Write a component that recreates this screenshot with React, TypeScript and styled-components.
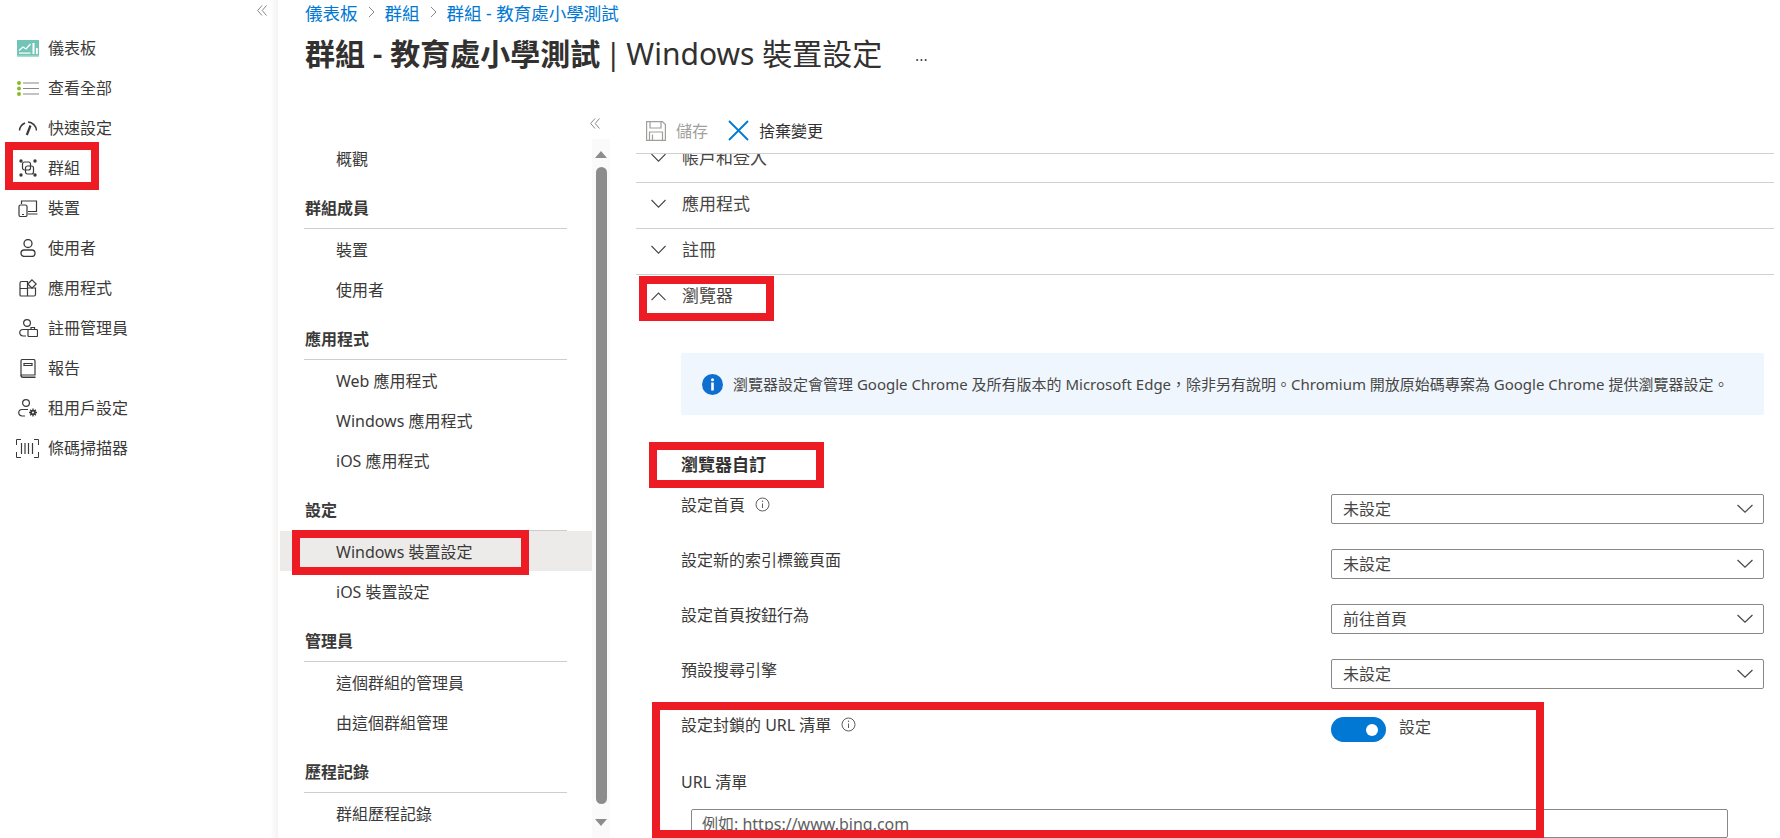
import React from "react";
import styled, { createGlobalStyle } from "styled-components";

const Global = createGlobalStyle`
  html, body { margin: 0; padding: 0; height: 838px; overflow: hidden; background: #fff; }
  body { font-family: "Noto Sans", "Noto Sans CJK TC", sans-serif; color: #323130; font-size: 16px; }
  * { box-sizing: border-box; }
`;

const Page = styled.div`
  position: relative;
  display: flex;
  width: 1780px;
  height: 838px;
  overflow: hidden;
`;

const Sidebar = styled.nav`
  width: 278px;
  flex: none;
  background: linear-gradient(to right, #fff 270px, #f3f3f3 278px);
`;

const SidebarTop = styled.div`
  height: 28px;
  display: flex;
  justify-content: flex-end;
  padding: 5px 11px 0 0;
`;

const SideItem = styled.div`
  height: 40px;
  display: flex;
  align-items: center;
  gap: 8px;
  padding-left: 16px;
  line-height: 24px;
  color: #3b3a39;
`;

const SideIcon = styled.span`
  width: 24px;
  height: 24px;
  display: flex;
  align-items: center;
  justify-content: center;
  flex: none;
`;

const Main = styled.main`
  flex: 1;
  min-width: 0;
  display: flex;
  flex-direction: column;
`;

const Header = styled.header`
  height: 100px;
  flex: none;
  padding: 0 0 0 27px;
`;

const Crumbs = styled.div`
  display: flex;
  align-items: center;
  height: 24px;
  font-size: 17.5px;
  color: #0078d4;
  gap: 10px;
`;

const TitleRow = styled.div`
  display: flex;
  align-items: center;
  margin-top: 11px;
  height: 38px;
`;

const Title = styled.h1`
  margin: 0;
  font-size: 30px;
  line-height: 38px;
  font-weight: 400;
  color: #323130;
  white-space: nowrap;
  b { font-weight: 600; }
`;

const TitleSep = styled.span`
  word-spacing: -3px;
`;

const More = styled.span`
  margin-left: 33px;
  font-size: 14px;
  line-height: 14px;
  margin-top: 4px;
  color: #323130;
  letter-spacing: 0.5px;
`;

const Split = styled.div`
  flex: 1;
  min-height: 0;
  display: flex;
`;

const SecNav = styled.aside`
  width: 358px;
  flex: none;
  display: flex;
  flex-direction: column;
  min-height: 0;
`;

const SecNavTop = styled.div`
  height: 39px;
  flex: none;
  display: flex;
  justify-content: flex-end;
  padding: 18px 36px 0 0;
`;

const SecNavBody = styled.div`
  flex: 1;
  min-height: 0;
  display: flex;
`;

const SecList = styled.div`
  width: 314px;
  flex: none;
  padding-left: 2px;
`;

const GroupHead = styled.div`
  height: 50px;
  margin: 0 25px 1px 24px;
  display: flex;
  align-items: flex-end;
  padding: 0 0 8px 1px;
  border-bottom: 1px solid #cfcdcb;
  font-weight: 600;
  line-height: 24px;
  color: #3b3a39;
`;

const SecItem = styled.div<{ $active?: boolean }>`
  height: 40px;
  display: flex;
  align-items: center;
  padding-left: 56px;
  line-height: 24px;
  color: #3b3a39;
  ${(p) => (p.$active ? "background:#edebe9; margin: -1px 0 1px; padding-top: 2px;" : "")}
`;

const ScrollTrack = styled.div`
  width: 18px;
  flex: none;
  background: #fafafa;
  display: flex;
  flex-direction: column;
  align-items: center;
  padding: 12px 0 12px 0;
`;

const ScrollUp = styled.span`
  width: 0;
  height: 0;
  border-left: 6.5px solid transparent;
  border-right: 6.5px solid transparent;
  border-bottom: 7px solid #8c8c8c;
`;

const ScrollThumb = styled.div`
  width: 11px;
  margin: 9px 0 15px;
  flex: 1;
  background: #8c8c8c;
  border-radius: 5.5px;
`;

const ScrollDown = styled.span`
  width: 0;
  height: 0;
  border-left: 6.5px solid transparent;
  border-right: 6.5px solid transparent;
  border-top: 7px solid #8c8c8c;
`;

const Pane = styled.section`
  width: 1138px;
  flex: none;
  display: flex;
  flex-direction: column;
  min-height: 0;
`;

const Toolbar = styled.div`
  height: 54px;
  flex: none;
  display: flex;
  align-items: center;
  padding: 8px 0 0 10px;
  border-bottom: 1px solid #d2d0ce;
`;

const ToolButton = styled.div<{ $disabled?: boolean }>`
  display: flex;
  align-items: center;
  gap: 10px;
  margin-right: 20px;
  line-height: 24px;
  color: ${(p) => (p.$disabled ? "#a19f9d" : "#323130")};
`;

const PaneScroll = styled.div`
  flex: 1;
  min-height: 0;
  overflow: hidden;
`;

const PaneInner = styled.div`
  margin-top: -17px;
`;

const AccRow = styled.div<{ $open?: boolean }>`
  height: 46px;
  display: flex;
  align-items: center;
  gap: 16px;
  padding: 0 0 4px 15px;
  font-size: 17px;
  line-height: 24px;
  color: #484644;
  ${(p) => (p.$open ? "" : "border-bottom: 1px solid #d2d0ce;")}
`;

const InfoBar = styled.div`
  margin: 32px 10px 0 45px;
  height: 62px;
  background: #eff6fe;
  border-radius: 2px;
  display: flex;
  align-items: center;
  gap: 10px;
  padding: 0 0 0 21px;
  font-size: 15px;
  line-height: 22px;
  color: #484644;
  white-space: nowrap;
`;

const SectionTitle = styled.h3`
  margin: 38px 0 0 45px;
  height: 41px;
  font-size: 17px;
  line-height: 24px;
  font-weight: 600;
  color: #323130;
`;

const Field = styled.div<{ $h?: number }>`
  display: flex;
  height: ${(p) => p.$h ?? 55}px;
  padding-left: 45px;
  margin-right: 10px;
`;

const FieldLabel = styled.div`
  width: 650px;
  height: 24px;
  margin-top: -1px;
  flex: none;
  display: flex;
  align-items: flex-start;
  gap: 10px;
  line-height: 24px;
  color: #3b3a39;
`;

const Select = styled.div`
  width: 433px;
  height: 30px;
  display: flex;
  align-items: center;
  justify-content: space-between;
  padding: 0 10px 1px 11px;
  border: 1px solid #8a8886;
  border-radius: 2px;
  line-height: 24px;
  color: #484644;
`;

const ToggleWrap = styled.div`
  display: flex;
  align-items: flex-start;
  gap: 13px;
  height: 25px;
  margin-top: 3px;
  line-height: 20px;
  color: #484644;
`;

const Toggle = styled.span`
  width: 55px;
  height: 25px;
  border-radius: 13px;
  background: #0078d4;
  display: flex;
  align-items: center;
  justify-content: flex-end;
  padding-right: 8px;
`;

const Knob = styled.span`
  width: 12px;
  height: 12px;
  border-radius: 50%;
  background: #fff;
`;

const SubLabel = styled.div`
  margin: -1px 0 0 45px;
  height: 24px;
  line-height: 24px;
  color: #3b3a39;
`;

const UrlInput = styled.input`
  display: block;
  margin: 15px 0 0 55px;
  width: 1037px;
  height: 29px;
  padding: 0 10px;
  border: 1px solid #8a8886;
  border-radius: 2px;
  font: inherit;
  line-height: 24px;
  &::placeholder { color: #605e5c; opacity: 1; }
`;

const Mark = styled.div<{ $x: number; $y: number; $w: number; $h: number }>`
  position: absolute;
  left: ${(p) => p.$x}px;
  top: ${(p) => p.$y}px;
  width: ${(p) => p.$w}px;
  height: ${(p) => p.$h}px;
  border: 8px solid #ed1c24;
  pointer-events: none;
`;

const DoubleLeft = () => (
  <svg width="10" height="11" viewBox="0 0 10 11" fill="none" stroke="#8a8886" strokeWidth="1">
    <path d="M5 .5 .7 5.5 5 10.500M9.500 .5 5.200 5.500l4.300 5" />
  </svg>
);

const Chevron = ({ up, w = 15 }: { up?: boolean; w?: number }) => (
  <svg width={w} height="9" viewBox="0 0 15 9" fill="none" stroke="#484644" strokeWidth="1.100" preserveAspectRatio="none">
    <path d={up ? "M.5 8.200 7.500 1l7 7.200" : "M.5 1l7 7.200L14.500 1"} />
  </svg>
);

const Sep = () => (
  <svg width="7" height="12" viewBox="0 0 7 12" fill="none" stroke="#8a8886" strokeWidth="1">
    <path d="M1 1l5 5-5 5" />
  </svg>
);

const SmallInfo = () => (
  <svg width="15" height="15" viewBox="0 0 15 15" fill="none" stroke="#605e5c" strokeWidth="1" style={{ marginTop: 4 }}>
    <circle cx="7.500" cy="7.500" r="6.500" />
    <path d="M7.500 6.500v4.500" />
    <circle cx="7.500" cy="4.300" r=".7" fill="#605e5c" stroke="none" />
  </svg>
);

const dark = "#3b3a39";

const icons: Record<string, React.ReactNode> = {
  dash: (
    <svg width="22" height="17" viewBox="0 0 22 17" style={{ marginLeft: -1 }}>
      <rect width="22" height="17" fill="#72c5b6" />
      <rect y="15.500" width="22" height="1.500" fill="#a8ddd3" />
      <path d="M2 10.500 6 7l3 2 4.500-5" fill="none" stroke="#fff" strokeWidth="1.200" />
      <rect x="2" y="12.500" width="11.500" height="1.200" fill="#fff" />
      <rect x="15.500" y="3" width="2" height="11" fill="#fff" />
      <rect x="19" y="8" width="1.800" height="6" fill="#fff" />
    </svg>
  ),
  list: (
    <svg width="22" height="15" viewBox="0 0 22 15" style={{ marginLeft: -1 }}>
      <circle cx="2" cy="2" r="2" fill="#86bc25" />
      <circle cx="2" cy="7.500" r="2" fill="#86bc25" />
      <circle cx="2" cy="13" r="2" fill="#86bc25" />
      <path d="M6 2h16M6 7.500h16M6 13h16" stroke="#8a8886" strokeWidth="1.200" />
    </svg>
  ),
  gauge: (
    <svg width="20" height="16" viewBox="0 0 20 16" fill="none" stroke={dark}>
      <path d="M1.500 10.500A9 9 0 0 1 7 3" strokeWidth="1.500" />
      <path d="M10 2A9 9 0 0 1 18.500 10.500" strokeWidth="1.500" />
      <path d="M8.800 15 12.500 5.500" strokeWidth="2.200" />
    </svg>
  ),
  group: (
    <svg width="18" height="18" viewBox="0 0 18 18" fill="none" stroke={dark} strokeWidth="1.200">
      <circle cx="2" cy="2" r="1.700" fill={dark} stroke="none" />
      <circle cx="16" cy="2" r="1.700" fill={dark} stroke="none" />
      <circle cx="2" cy="16" r="1.700" fill={dark} stroke="none" />
      <circle cx="16" cy="16" r="1.700" fill={dark} stroke="none" />
      <rect x="3.500" y="3" width="8" height="8" rx="2" />
      <rect x="6.500" y="7" width="8" height="8" rx="2" />
    </svg>
  ),
  device: (
    <svg width="20" height="17" viewBox="0 0 20 17" fill="none" stroke={dark} strokeWidth="1.200">
      <path d="M3.500 4V1h15v10.500H10M10 14h9.500" />
      <rect x="1" y="5" width="8" height="11.500" rx="1.500" />
      <path d="M4 14.500h2" />
    </svg>
  ),
  user: (
    <svg width="16" height="18" viewBox="0 0 16 18" fill="none" stroke={dark} strokeWidth="1.300">
      <circle cx="8" cy="4.500" r="4" />
      <rect x="1" y="11" width="14" height="6.500" rx="3.200" />
    </svg>
  ),
  apps: (
    <svg width="18" height="18" viewBox="0 0 18 18" fill="none" stroke={dark} strokeWidth="1.200">
      <path d="M8.500 2.500h-6a1.500 1.500 0 0 0-1.500 1.500v12a1 1 0 0 0 1 1h13a1.500 1.500 0 0 0 1.500-1.500v-6.500H8.500zM8.500 9.500H1M8.500 9.500V17" />
      <path d="M13 .8 17.200 5 13 9.200 8.800 5z" />
    </svg>
  ),
  admin: (
    <svg width="19" height="18" viewBox="0 0 19 18" fill="none" stroke={dark} strokeWidth="1.200">
      <circle cx="8" cy="4" r="3.400" />
      <path d="M7 17H4a3 3 0 0 1 0-6.500h6" />
      <rect x="9" y="10.500" width="9.500" height="7" rx="1" />
      <path d="M12 10.500V8.500h3.500v2" />
    </svg>
  ),
  book: (
    <svg width="16" height="19" viewBox="0 0 16 19" fill="none" stroke={dark} strokeWidth="1.200">
      <path d="M1 16V2a1.500 1.500 0 0 1 1.500-1.500h11A1.500 1.500 0 0 1 15 2v14z" />
      <path d="M4 4.500h8v2H4z" />
      <path d="M1 16c0 1.500 1 2.200 2 2.200h12.500" strokeWidth="1.400" />
    </svg>
  ),
  tenant: (
    <svg width="20" height="18" viewBox="0 0 20 18" fill="none" stroke={dark} strokeWidth="1.200">
      <circle cx="8" cy="4" r="3.400" />
      <path d="M7 17H4a3 3 0 0 1 0-6.500h6" />
      <circle cx="15" cy="13.500" r="2.800" fill={dark} stroke="none" />
      <path d="M15 9.500v8M11 13.500h8M12.200 10.700l5.600 5.600M17.800 10.700l-5.600 5.600" strokeWidth="1.300" />
      <circle cx="15" cy="13.500" r="1" fill="#fff" stroke="none" />
    </svg>
  ),
  barcode: (
    <svg width="23" height="19" viewBox="0 0 23 19" fill="none" stroke={dark} strokeWidth="1" style={{ marginLeft: -1 }}>
      <path d="M5 .5H.5V6M18 .5h4.500V6M.5 13v5.500H5M22.500 13v5.500H18" />
      <path d="M5.500 4v11M9 4v11M12.500 4v11M16.500 4v11" strokeWidth="1.200" />
    </svg>
  ),
};

const sideItems: [string, string][] = [
  ["dash", "儀表板"],
  ["list", "查看全部"],
  ["gauge", "快速設定"],
  ["group", "群組"],
  ["device", "裝置"],
  ["user", "使用者"],
  ["apps", "應用程式"],
  ["admin", "註冊管理員"],
  ["book", "報告"],
  ["tenant", "租用戶設定"],
  ["barcode", "條碼掃描器"],
];

const groups: { head?: string; items: string[] }[] = [
  { items: ["概觀"] },
  { head: "群組成員", items: ["裝置", "使用者"] },
  { head: "應用程式", items: ["Web 應用程式", "Windows 應用程式", "iOS 應用程式"] },
  { head: "設定", items: ["Windows 裝置設定", "iOS 裝置設定"] },
  { head: "管理員", items: ["這個群組的管理員", "由這個群組管理"] },
  { head: "歷程記錄", items: ["群組歷程記錄"] },
];

export default function App() {
  return (
    <Page>
      <Global />
      <Sidebar>
        <SidebarTop>
          <DoubleLeft />
        </SidebarTop>
        {sideItems.map(([icon, label]) => (
          <SideItem key={label}>
            <SideIcon>{icons[icon]}</SideIcon>
            {label}
          </SideItem>
        ))}
      </Sidebar>
      <Main>
        <Header>
          <Crumbs>
            <span>儀表板</span>
            <Sep />
            <span>群組</span>
            <Sep />
            <span>群組 - 教育處小學測試</span>
          </Crumbs>
          <TitleRow>
            <Title>
              <b>群組 - 教育處小學測試</b>
              <TitleSep> | </TitleSep>Windows 裝置設定
            </Title>
            <More>...</More>
          </TitleRow>
        </Header>
        <Split>
          <SecNav>
            <SecNavTop>
              <DoubleLeft />
            </SecNavTop>
            <SecNavBody>
              <SecList>
                {groups.map((g, i) => (
                  <React.Fragment key={i}>
                    {g.head && <GroupHead>{g.head}</GroupHead>}
                    {g.items.map((it) => (
                      <SecItem key={it} $active={it === "Windows 裝置設定"}>
                        {it}
                      </SecItem>
                    ))}
                  </React.Fragment>
                ))}
              </SecList>
              <ScrollTrack>
                <ScrollUp />
                <ScrollThumb />
                <ScrollDown />
              </ScrollTrack>
            </SecNavBody>
          </SecNav>
          <Pane>
            <Toolbar>
              <ToolButton $disabled>
                <svg width="20" height="20" viewBox="0 0 20 20" fill="none" stroke="#a19f9d" strokeWidth="1.200">
                  <path d="M.6.6h15.800l3 3v15.800H.6z" />
                  <path d="M4 .6v6.400h11V.6M3.500 19.400v-8.400h13v8.400M6.500 13.500v6" />
                </svg>
                儲存
              </ToolButton>
              <ToolButton>
                <svg width="21" height="21" viewBox="0 0 21 21" fill="none" stroke="#0078d4" strokeWidth="1.800">
                  <path d="M1 1l19 19M20 1 1 20" />
                </svg>
                捨棄變更
              </ToolButton>
            </Toolbar>
            <PaneScroll>
              <PaneInner>
                <AccRow><Chevron />帳戶和登入</AccRow>
                <AccRow><Chevron />應用程式</AccRow>
                <AccRow><Chevron />註冊</AccRow>
                <AccRow $open><Chevron up />瀏覽器</AccRow>
                <InfoBar>
                  <svg width="21" height="21" viewBox="0 0 21 21">
                    <circle cx="10.500" cy="10.500" r="10.500" fill="#0f6fd1" />
                    <circle cx="10.500" cy="5.800" r="1.500" fill="#fff" />
                    <rect x="9.200" y="8.500" width="2.600" height="8" fill="#fff" />
                  </svg>
                  瀏覽器設定會管理 Google Chrome 及所有版本的 Microsoft Edge，除非另有說明。Chromium 開放原始碼專案為 Google Chrome 提供瀏覽器設定。
                </InfoBar>
                <SectionTitle>瀏覽器自訂</SectionTitle>
                <Field>
                  <FieldLabel>設定首頁 <SmallInfo /></FieldLabel>
                  <Select>未設定<Chevron w={16} /></Select>
                </Field>
                <Field>
                  <FieldLabel>設定新的索引標籤頁面</FieldLabel>
                  <Select>未設定<Chevron w={16} /></Select>
                </Field>
                <Field>
                  <FieldLabel>設定首頁按鈕行為</FieldLabel>
                  <Select>前往首頁<Chevron w={16} /></Select>
                </Field>
                <Field>
                  <FieldLabel>預設搜尋引擎</FieldLabel>
                  <Select>未設定<Chevron w={16} /></Select>
                </Field>
                <Field $h={57}>
                  <FieldLabel>設定封鎖的 URL 清單 <SmallInfo /></FieldLabel>
                  <ToggleWrap>
                    <Toggle><Knob /></Toggle>
                    設定
                  </ToggleWrap>
                </Field>
                <SubLabel>URL 清單</SubLabel>
                <UrlInput placeholder="例如: https://www.bing.com" readOnly />
              </PaneInner>
            </PaneScroll>
          </Pane>
        </Split>
      </Main>
      <Mark $x={5} $y={142} $w={94} $h={48} />
      <Mark $x={292} $y={530} $w={237} $h={45} />
      <Mark $x={639} $y={276} $w={135} $h={45} />
      <Mark $x={649} $y={442} $w={175} $h={46} />
      <Mark $x={652} $y={702} $w={892} $h={136} />
    </Page>
  );
}
